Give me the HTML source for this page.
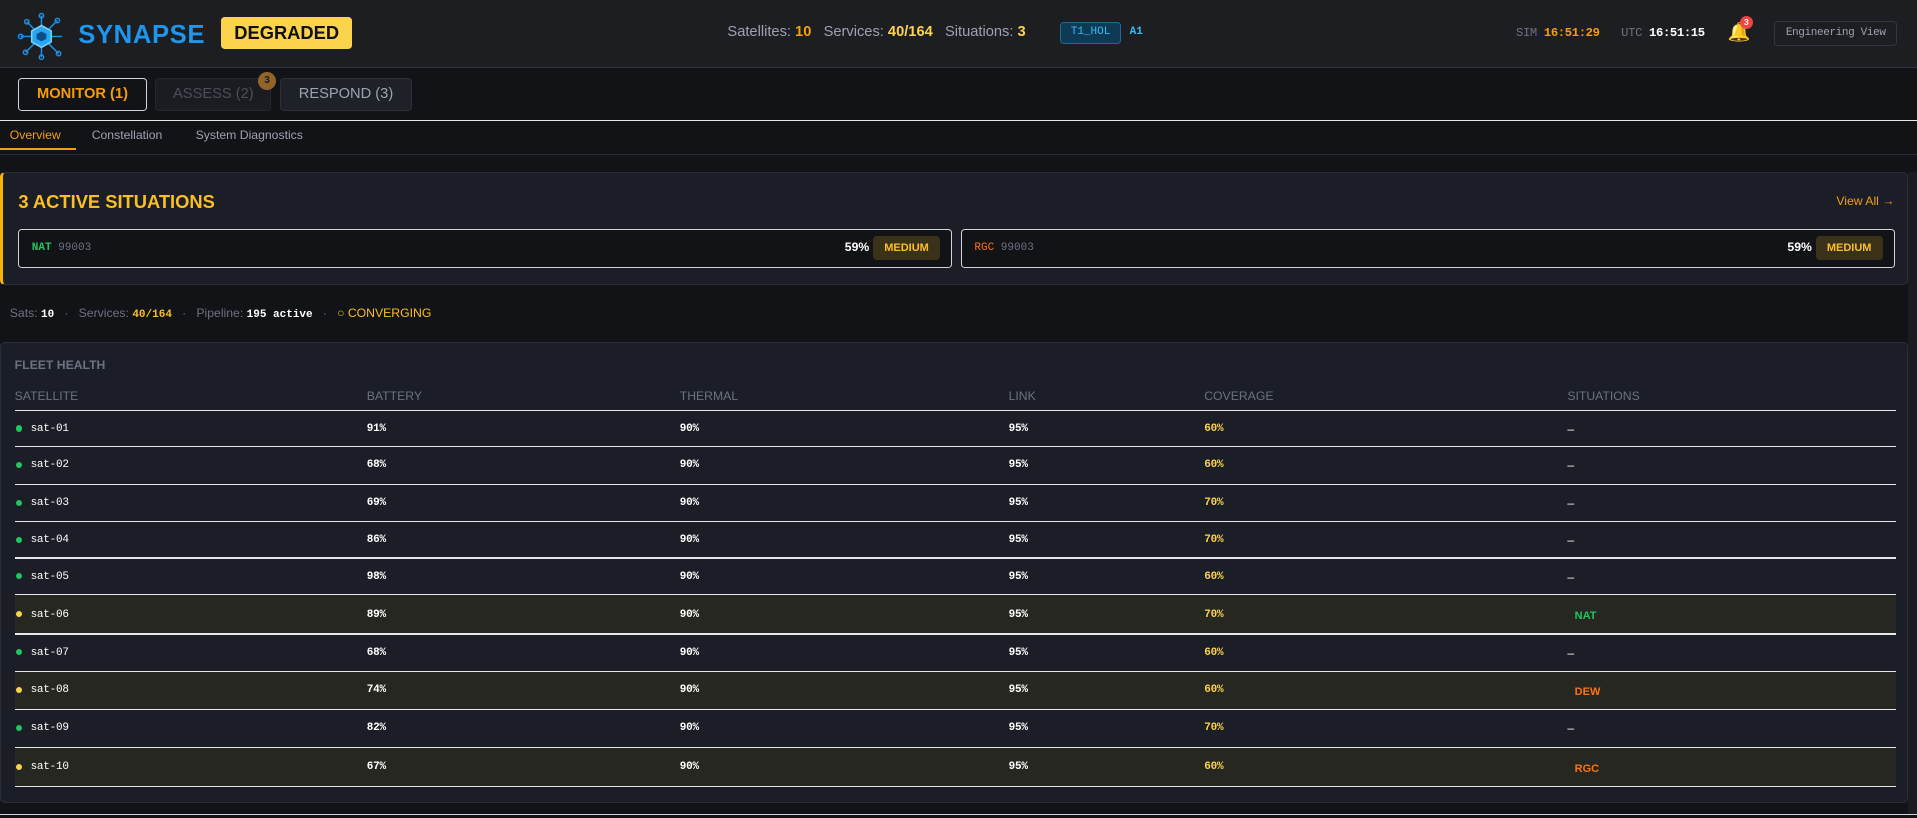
<!DOCTYPE html>
<html><head><meta charset="utf-8"><style>
*{box-sizing:border-box;margin:0;padding:0}
html,body{width:1917px;height:818px;overflow:hidden;background:#121317;font-family:"Liberation Sans",sans-serif}
#w{zoom:1.22258;width:1568px;height:669px;position:relative;color:#e5e7eb}
.a{position:absolute;white-space:nowrap}
.mono{font-family:"Liberation Mono",monospace}
#hdr{left:0;top:0;width:1568px;height:56px;background:#1d1e22;border-bottom:1px solid #33353b}
</style></head><body><div id="w">
<div class="a" id="hdr"></div>
<svg class="a" style="left:14px;top:10px" width="40" height="40" viewBox="0 0 40 40" fill="none" stroke="#1e90e0" stroke-width="1.2">
<line x1="20" y1="20" x2="20" y2="3"/><circle cx="20" cy="3" r="1.8"/><line x1="20" y1="20" x2="20" y2="37"/><circle cx="20" cy="37" r="1.8"/>
<line x1="20" y1="20" x2="3" y2="20"/><circle cx="3" cy="20" r="1.8"/><line x1="20" y1="20" x2="37" y2="20"/>
<line x1="20" y1="20" x2="8" y2="8"/><circle cx="8" cy="8" r="1.8"/><line x1="20" y1="20" x2="33" y2="7"/><circle cx="33" cy="7" r="1.8"/>
<line x1="20" y1="20" x2="7" y2="33"/><circle cx="7" cy="33" r="1.8"/><line x1="20" y1="20" x2="34" y2="34"/><circle cx="34" cy="34" r="1.8"/>
<polygon points="20,11 28,15.5 28,24.5 20,29 12,24.5 12,15.5" fill="#29a6f0" stroke="#7fd3ff"/>
<polygon points="20,16 24,18 24,22 20,24 16,22 16,18" fill="#0b4f8a" stroke="none"/>
</svg>
<div class="a" style="left:64px;top:17px;font-size:21px;font-weight:bold;color:#1e96ee;letter-spacing:0.5px">SYNAPSE</div>
<div class="a" style="left:181px;top:14px;width:107px;height:26px;background:#fcd34d;border-radius:3px;color:#111;font-weight:bold;font-size:15px;text-align:center;line-height:26px">DEGRADED</div>
<div class="a" style="left:595px;top:20px;font-size:12px;color:#9ca3af">Satellites: <b style="color:#f59e0b">10</b>&nbsp;&nbsp; Services: <b style="color:#fcd34d">40/164</b>&nbsp;&nbsp; Situations: <b style="color:#fcd34d">3</b></div>
<div class="a mono" style="left:867px;top:18px;width:50px;height:18px;background:#0f3a55;border:1px solid #1e6a95;border-radius:3px;color:#38bdf8;font-size:9px;text-align:center;line-height:16px">T1_HOL</div>
<div class="a mono" style="left:924px;top:21px;font-size:9px;color:#38bdf8;font-weight:bold">A1</div>
<div class="a mono" style="left:1240px;top:21px;font-size:10px;color:#6b7280;letter-spacing:-0.3px">SIM <b style="color:#f59e0b">16:51:29</b></div>
<div class="a mono" style="left:1326px;top:21px;font-size:10px;color:#6b7280;letter-spacing:-0.3px">UTC <b style="color:#fff">16:51:15</b></div>
<div class="a" style="left:1413px;top:17px;font-size:15px;color:#f5a524">🔔</div>
<div class="a" style="left:1423px;top:13px;width:11px;height:11px;border-radius:50%;background:#ef4444;color:#fff;font-size:7px;text-align:center;line-height:11px;font-weight:bold">3</div>
<div class="a mono" style="left:1451px;top:17px;width:101px;height:21px;border:1px solid #33363d;border-radius:3px;color:#9ca3af;font-size:9px;text-align:center;line-height:19px;letter-spacing:-0.3px">Engineering View</div>

<div class="a" style="left:15px;top:64px;width:105px;height:27px;border:1px solid #d1d5db;border-radius:3px;background:#121317;color:#f59e0b;font-weight:bold;font-size:12px;text-align:center;line-height:25px">MONITOR (1)</div>
<div class="a" style="left:127px;top:64px;width:95px;height:27px;border:1px solid #24272e;border-radius:3px;background:#1a1c21;color:#4b5058;font-size:12px;text-align:center;line-height:25px">ASSESS (2)</div>
<div class="a" style="left:211px;top:59px;width:15px;height:15px;border-radius:50%;background:#92642a;color:#1a1a1a;font-size:8px;font-weight:bold;text-align:center;line-height:15px">3</div>
<div class="a" style="left:229px;top:64px;width:108px;height:27px;border:1px solid #2c2f36;border-radius:3px;background:#1e2128;color:#9ca3af;font-size:12px;text-align:center;line-height:25px">RESPOND (3)</div>
<div class="a" style="left:0;top:98px;width:1568px;height:1px;background:#e5e7eb"></div>
<div class="a" style="left:8px;top:105px;font-size:10px;color:#f59e0b">Overview</div>
<div class="a" style="left:75px;top:105px;font-size:10px;color:#9ca3af">Constellation</div>
<div class="a" style="left:160px;top:105px;font-size:10px;color:#9ca3af">System Diagnostics</div>
<div class="a" style="left:0;top:121px;width:62px;height:2px;background:#f59e0b"></div>
<div class="a" style="left:0;top:126px;width:1568px;height:1px;background:#2a2c31"></div>

<div class="a" style="left:0;top:141px;width:1561px;height:92px;background:#1b1e26;border:1px solid #2a2e37;border-left:3px solid #f5b50b;border-radius:4px"></div>
<div class="a" style="left:15px;top:156px;font-size:15px;font-weight:bold;color:#fbbf24">3 ACTIVE SITUATIONS</div>
<div class="a" style="left:1502px;top:159px;font-size:10px;color:#f59e0b">View All →</div>
<div class="a" style="left:15px;top:187px;width:764px;height:32px;background:#121317;border:1px solid #d1d5db;border-radius:3px"></div>
<div class="a mono" style="left:26px;top:198px;font-size:9px;color:#6b7280"><b style="color:#22c55e">NAT</b> 99003</div>
<div class="a" style="left:691px;top:196px;font-size:10px;color:#fff;font-weight:bold">59%</div>
<div class="a" style="left:714px;top:193px;width:55px;height:20px;background:#3a3218;border-radius:3px;color:#fbbf24;font-size:9px;font-weight:bold;text-align:center;line-height:20px">MEDIUM</div>
<div class="a" style="left:786px;top:187px;width:764px;height:32px;background:#121317;border:1px solid #d1d5db;border-radius:3px"></div>
<div class="a mono" style="left:797px;top:198px;font-size:9px;color:#6b7280"><span style="color:#f97316">RGC</span> 99003</div>
<div class="a" style="left:1462px;top:196px;font-size:10px;color:#fff;font-weight:bold">59%</div>
<div class="a" style="left:1485px;top:193px;width:55px;height:20px;background:#3a3218;border-radius:3px;color:#fbbf24;font-size:9px;font-weight:bold;text-align:center;line-height:20px">MEDIUM</div>

<div class="a" style="left:8px;top:250px;font-size:10px;color:#6b7280">Sats: <b class="mono" style="color:#fff;font-size:9px">10</b> &nbsp; · &nbsp; Services: <b class="mono" style="color:#fbbf24;font-size:9px">40/164</b> &nbsp; · &nbsp; Pipeline: <b class="mono" style="color:#fff;font-size:9px">195 active</b> &nbsp; · &nbsp; <span style="color:#fbbf24">○ CONVERGING</span></div>

<div class="a" style="left:0;top:280px;width:1561px;height:377px;background:#1b1e26;border:1px solid #2a2e37;border-radius:4px"></div>
<div class="a" style="left:12px;top:293px;font-size:10px;font-weight:bold;color:#6b7280">FLEET HEALTH</div>
<div class="a" style="left:12px;top:318px;width:1540px;font-size:10px;color:#6b7280">
<span class="a" style="left:0">SATELLITE</span><span class="a" style="left:288px">BATTERY</span><span class="a" style="left:544px">THERMAL</span><span class="a" style="left:813px">LINK</span><span class="a" style="left:973px">COVERAGE</span><span class="a" style="left:1270px">SITUATIONS</span></div>
<div class="a" style="left:12px;top:335px;width:1539px;height:1px;background:#e5e7eb"></div>
<div id="rows"></div>
<div class="a" style="left:0;top:666px;width:1568px;height:1px;background:#d1d5db"></div>
<div class="a" style="left:1561px;top:141px;width:7px;height:525px;background:#1a1c22"></div>
</div>
<script>
var d=[["01",91,60,0,"g"],["02",68,60,0,"g"],["03",69,70,0,"g"],["04",86,70,0,"g"],["05",98,60,0,"g"],["06",89,70,"NAT","y"],["07",68,60,0,"g"],["08",74,60,"DEW","y"],["09",82,70,0,"g"],["10",67,60,"RGC","y"]];
var L=[365,396,426,456,486,518,549,580,611,643];
var y=336,h="";
d.forEach(function(r,i){var hl=r[3]?1:0,H=L[i]-y;
if(hl)h+='<div class="a" style="left:12px;top:'+y+'px;width:1539px;height:'+H+'px;background:#272722"></div>';
var c=Math.round(y+H/2),t=c-6,sc=r[3]=="NAT"?"#22c55e":"#f97316",ms='font-size:9px;line-height:12px;letter-spacing:-0.2px;';
h+='<div class="a" style="left:13px;top:'+(c-3)+'px;width:5px;height:5px;border-radius:50%;background:'+(r[4]=="g"?"#22c55e":"#fcd34d")+'"></div>';
h+='<div class="a mono" style="left:25px;top:'+t+'px;'+ms+'color:#fff">sat-'+r[0]+'</div>';
h+='<div class="a mono" style="left:300px;top:'+t+'px;'+ms+'color:#fff;font-weight:bold">'+r[1]+'%</div>';
h+='<div class="a mono" style="left:556px;top:'+t+'px;'+ms+'color:#fff;font-weight:bold">90%</div>';
h+='<div class="a mono" style="left:825px;top:'+t+'px;'+ms+'color:#fff;font-weight:bold">95%</div>';
h+='<div class="a mono" style="left:985px;top:'+t+'px;'+ms+'color:#fcd34d;font-weight:bold">'+r[2]+'%</div>';
h+=r[3]?'<div class="a" style="left:1288px;top:'+(t+1)+'px;font-size:9px;line-height:12px;font-weight:bold;color:'+sc+'">'+r[3]+'</div>':'<div class="a" style="left:1282px;top:'+t+'px;font-size:10px;line-height:12px;color:#fff">–</div>';
h+='<div class="a" style="left:12px;top:'+L[i]+'px;width:1539px;height:1px;background:#e5e7eb"></div>';y=L[i]+1;});
document.getElementById("rows").outerHTML=h;
</script>
</body></html>
